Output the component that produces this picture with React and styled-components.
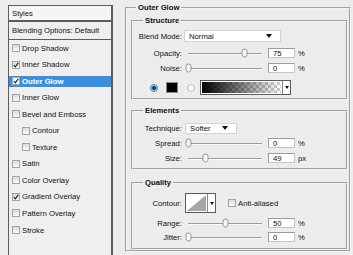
import React from 'react'
import styled, { createGlobalStyle } from 'styled-components'

const GlobalStyle = createGlobalStyle`
  html, body {
    margin: 0;
    padding: 0;
  }
  body {
    background: #ececec;
    font-family: "Liberation Sans", Arial, sans-serif;
    font-size: 7.7px;
    color: #111;
    overflow: hidden;
  }
`

const Dialog = styled.div`
  display: flex;
  width: 353px;
  height: 255px;
  overflow: hidden;
`

/* ---------- left list ---------- */

const StylePanel = styled.div`
  width: 102px;
  margin: 5px 0 0 8px;
  border: 1px solid #5c5c5c;
  border-right-width: 2px;
  border-bottom: none;
  background: #efefef;
  display: flex;
  flex-direction: column;
`

const PanelHeader = styled.div`
  height: ${props => props.$h}px;
  display: flex;
  align-items: center;
  padding-left: 3px;
  background: ${props => props.$light ? '#f5f5f5' : '#efefef'};
  border-bottom: ${props => props.$line}px solid #5c5c5c;
`

const ListRow = styled.div`
  height: 16.55px;
  box-sizing: border-box;
  padding: 2.5px 0 3px;
  display: flex;
  align-items: center;
  background: ${props => props.$selected ? '#3b8fdf' : 'transparent'};
  background-clip: content-box;
  color: ${props => props.$selected ? '#fff' : '#111'};
  font-weight: ${props => props.$selected ? 'bold' : 'normal'};
`

const Box = styled.span`
  width: 8px;
  height: 8px;
  box-sizing: border-box;
  flex-shrink: 0;
  margin-left: ${props => props.$ml || 0}px;
  margin-right: 2px;
  border: 1px solid #a4a4a4;
  background: ${props => props.$bright ? '#fff' : 'linear-gradient(#dadada, #fafafa)'};
  display: flex;
  align-items: center;
  justify-content: center;
`

const Check = () => (
  <svg width="6" height="6" viewBox="0 0 6 6">
    <path d="M0.8 3.2 L2.3 4.8 L5.3 0.8" fill="none" stroke="#1a1a1a" strokeWidth="1.1" />
  </svg>
)

const CheckBox = ({ checked, indent, bright }) => (
  <Box $ml={indent} $bright={bright}>{checked && <Check />}</Box>
)

const effects = [
  { name: 'Drop Shadow' },
  { name: 'Inner Shadow', checked: true },
  { name: 'Outer Glow', checked: true, selected: true },
  { name: 'Inner Glow' },
  { name: 'Bevel and Emboss' },
  { name: 'Contour', sub: true },
  { name: 'Texture', sub: true },
  { name: 'Satin' },
  { name: 'Color Overlay' },
  { name: 'Gradient Overlay', checked: true },
  { name: 'Pattern Overlay' },
  { name: 'Stroke' },
]

/* ---------- right settings ---------- */

const Settings = styled.div`
  flex: 1;
  padding: 3px 2px 0 12px;
`

const Group = styled.fieldset`
  margin: ${props => props.$mt || 0}px 0 0;
  padding: ${props => props.$pad};
  border: 2px groove #f4f4f4;
  min-width: 0;
`

const Legend = styled.legend`
  margin-left: ${props => props.$ml}px;
  padding: 0 2px;
  height: 10px;
  line-height: 10px;
  font-weight: bold;
`

const Field = styled.div`
  display: flex;
  align-items: center;
  height: ${props => props.$h || 12}px;
  margin-top: ${props => props.$mt || 0}px;
`

const Label = styled.span`
  width: 49px;
  flex-shrink: 0;
  text-align: right;
  white-space: nowrap;
`

const Select = styled.div`
  width: ${props => props.$w}px;
  height: ${props => props.$h}px;
  margin-left: ${props => props.$ml}px;
  box-sizing: border-box;
  background: #fff;
  border: 1px solid #d4d4d4;
  display: flex;
  align-items: center;
  justify-content: space-between;
  padding: 0 8px 0 4px;
`

const Arrow = () => (
  <svg width="6" height="4" viewBox="0 0 6 4">
    <path d="M0 0 H6 L3 4 Z" fill="#111" />
  </svg>
)

const Slider = styled.div`
  position: relative;
  width: 80px;
  height: 12px;
  margin-left: 3px;
`

const Track = styled.div`
  position: absolute;
  left: 3px;
  right: 3px;
  top: 6px;
  height: 1px;
  background: #9c9c9c;
  box-shadow: 0 1px #fbfbfb;
`

const Thumb = styled.svg`
  position: absolute;
  top: 1px;
  left: ${props => props.$pos * 0.74}px;
`

const Range = ({ pos }) => (
  <Slider>
    <Track />
    <Thumb $pos={pos} width="7" height="10" viewBox="0 0 7 10">
      <path d="M1 3 Q1 1 3.5 1 Q6 1 6 3 L6 7.5 L3.5 9.3 L1 7.5 Z" fill="#f6f6f6" stroke="#8c8c8c" strokeWidth="0.9" />
    </Thumb>
  </Slider>
)

const NumberBox = styled.div`
  width: 27px;
  height: 10px;
  margin-left: 3px;
  box-sizing: border-box;
  background: #fff;
  border: 1px solid #c4c4c4;
  border-top-color: #9c9c9c;
  border-left-color: #9c9c9c;
  padding-left: 4px;
  display: flex;
  align-items: center;
`

const Unit = styled.span`
  margin-left: 3px;
`

const Radio = styled.span`
  width: 8px;
  height: 8px;
  box-sizing: border-box;
  border-radius: 50%;
  margin-left: ${props => props.$ml}px;
  border: 1px solid ${props => props.$on ? '#3a7cb8' : '#c0c0c0'};
  background: ${props => props.$on
    ? 'radial-gradient(circle, #173f63 0 1.6px, #7fc2e8 2.2px, #e4f3fb 4px)'
    : 'radial-gradient(circle, #fafafa 0 2px, #e0e0e0 4px)'};
`

const Swatch = styled.span`
  width: 12px;
  height: 11px;
  margin-left: 8px;
  box-sizing: border-box;
  background: #000;
  border: 1px solid #8a8a8a;
`

const GradientPick = styled.div`
  width: 91px;
  height: 15px;
  margin-left: 5px;
  box-sizing: border-box;
  border: 1px solid #5a5a5a;
  display: flex;
  background: #fff;
`

const GradientFill = styled.div`
  flex: 1;
  margin: 1px;
  background:
    linear-gradient(to right, #000, rgba(0, 0, 0, 0)),
    repeating-conic-gradient(#cfcfcf 0 25%, #fff 0 50%) 0 0 / 6px 6px;
`

const DropPart = styled.div`
  width: 7px;
  border-left: 1px solid #8a8a8a;
  display: flex;
  align-items: center;
  justify-content: center;
  background: #fff;
`

const SmallArrow = () => (
  <svg width="4" height="3" viewBox="0 0 4 3">
    <path d="M0 0 H4 L2 3 Z" fill="#111" />
  </svg>
)

const ContourPick = styled.div`
  width: 31px;
  height: 20px;
  margin-left: 3px;
  box-sizing: border-box;
  border: 1px solid #5a5a5a;
  display: flex;
  background: #fff;
`

const ContourCurve = styled.svg`
  flex: 1;
  display: block;
`

export default function App() {
  return (
    <Dialog>
      <GlobalStyle />
      <StylePanel>
        <PanelHeader $h={14} $line={2} $light>Styles</PanelHeader>
        <PanelHeader $h={17} $line={1}>Blending Options: Default</PanelHeader>
        {effects.map(effect => (
          <ListRow key={effect.name} $selected={effect.selected}>
            <CheckBox
              checked={effect.checked}
              indent={effect.sub ? 13 : 3}
              bright={effect.selected}
            />
            {effect.name}
          </ListRow>
        ))}
      </StylePanel>

      <Settings>
        <Group $pad="3px 1px 0 4px">
          <Legend $ml={5}>Outer Glow</Legend>

          <Group $pad="4px 0 3px 0">
            <Legend $ml={10}>Structure</Legend>
            <Field>
              <Label>Blend Mode:</Label>
              <Select $w={97} $h={12} $ml={2}>Normal<Arrow /></Select>
            </Field>
            <Field $mt={5}>
              <Label>Opacity:</Label>
              <Range pos={75} />
              <NumberBox>75</NumberBox>
              <Unit>%</Unit>
            </Field>
            <Field $mt={3}>
              <Label>Noise:</Label>
              <Range pos={0} />
              <NumberBox>0</NumberBox>
              <Unit>%</Unit>
            </Field>
            <Field $h={15} $mt={6}>
              <Radio $ml={17} $on />
              <Swatch />
              <Radio $ml={9} />
              <GradientPick>
                <GradientFill />
                <DropPart><SmallArrow /></DropPart>
              </GradientPick>
            </Field>
          </Group>

          <Group $mt={6} $pad="6px 0 4px 0">
            <Legend $ml={10}>Elements</Legend>
            <Field>
              <Label>Technique:</Label>
              <Select $w={52} $h={11} $ml={3}>Softer<Arrow /></Select>
            </Field>
            <Field $mt={3}>
              <Label>Spread:</Label>
              <Range pos={0} />
              <NumberBox>0</NumberBox>
              <Unit>%</Unit>
            </Field>
            <Field $mt={3}>
              <Label>Size:</Label>
              <Range pos={23} />
              <NumberBox>49</NumberBox>
              <Unit>px</Unit>
            </Field>
          </Group>

          <Group $mt={8} $pad="4px 0 5px 0">
            <Legend $ml={10}>Quality</Legend>
            <Field $h={22}>
              <Label>Contour:</Label>
              <ContourPick>
                <ContourCurve viewBox="0 0 23 18" preserveAspectRatio="none">
                  <path d="M1 17 L22 1 L22 17 Z" fill="#a6a6a6" />
                </ContourCurve>
                <DropPart><SmallArrow /></DropPart>
              </ContourPick>
              <CheckBox indent={12} />
              Anti-aliased
            </Field>
            <Field $mt={3}>
              <Label>Range:</Label>
              <Range pos={50} />
              <NumberBox>50</NumberBox>
              <Unit>%</Unit>
            </Field>
            <Field $mt={2}>
              <Label>Jitter:</Label>
              <Range pos={0} />
              <NumberBox>0</NumberBox>
              <Unit>%</Unit>
            </Field>
          </Group>
        </Group>
      </Settings>
    </Dialog>
  )
}
